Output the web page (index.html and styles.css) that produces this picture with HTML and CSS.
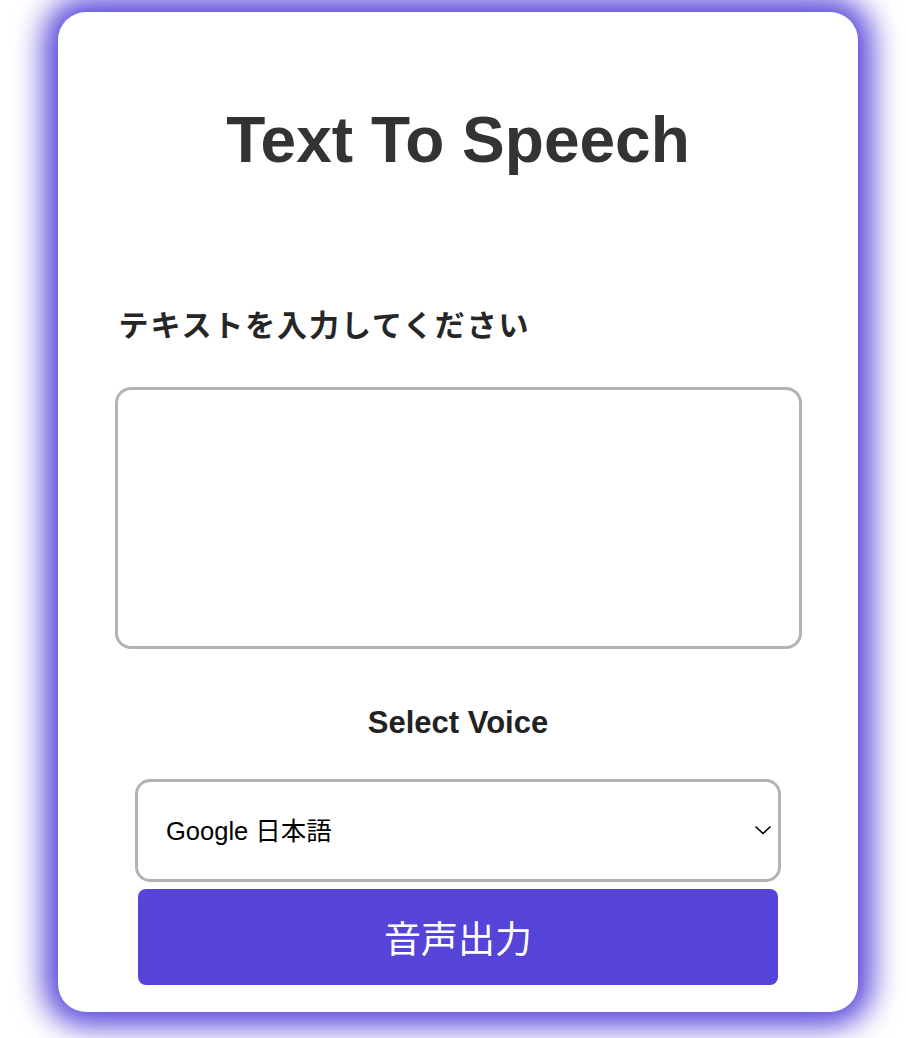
FILE: index.html
```html
<!DOCTYPE html>
<html lang="ja">
<head>
<meta charset="utf-8">
<title>Text To Speech</title>
<link rel="stylesheet" href="styles.css">
</head>
<body>
  <main class="card">
    <h1 class="title">Text To Speech</h1>
    <div class="form">
      <label class="label" for="text">テキストを入力してください</label>
      <textarea id="text" class="textarea"></textarea>
      <h2 class="voice-title">Select Voice</h2>
      <div class="select-wrap">
        <select class="select">
          <option>Google 日本語</option>
        </select>
        <svg class="chevron" width="16" height="9" viewBox="0 0 16 9" aria-hidden="true">
          <path d="M1 1 L8 7.5 L15 1" fill="none" stroke="#000" stroke-width="1.7" stroke-linecap="round" stroke-linejoin="round"/>
        </svg>
      </div>
      <button class="button" type="button">音声出力</button>
    </div>
  </main>
</body>
</html>
```

FILE: styles.css
```css
html, body {
  margin: 0;
  padding: 0;
  background: #ffffff;
}

body {
  padding: 12px 0 0 58px;
  font-family: "Liberation Sans", "Noto Sans CJK JP", sans-serif;
  overflow: hidden;
  height: 1038px;
  box-sizing: border-box;
}

.card {
  width: 800px;
  box-sizing: border-box;
  background: #ffffff;
  border-radius: 28px;
  padding: 96px 0 27px;
  box-shadow: 0 0 30px 14px #5644d9;
  display: flex;
  flex-direction: column;
  align-items: center;
}

.title {
  margin: 0;
  font-size: 64px;
  line-height: 64px;
  font-weight: 700;
  color: #333333;
  text-align: center;
}

.form {
  width: 687px;
  display: flex;
  flex-direction: column;
  align-items: center;
}

.label {
  align-self: flex-start;
  margin-top: 136px;
  padding-left: 4px;
  font-family: "Noto Sans CJK JP", sans-serif;
  font-weight: 700;
  font-size: 30px;
  line-height: 30px;
  letter-spacing: 1.9px;
  color: #262626;
}

.textarea {
  display: block;
  margin-top: 49px;
  width: 687px;
  height: 262px;
  box-sizing: border-box;
  border: 3px solid #b3b3b3;
  border-radius: 16px;
  background: #ffffff;
  resize: none;
  outline: none;
  font-size: 20px;
}

.voice-title {
  margin: 58px 0 0;
  font-size: 31px;
  line-height: 31px;
  font-weight: 700;
  color: #222222;
}

.select-wrap {
  position: relative;
  margin-top: 41px;
  width: 646px;
  height: 103px;
}

.select {
  appearance: none;
  -webkit-appearance: none;
  width: 646px;
  height: 103px;
  box-sizing: border-box;
  border: 3px solid #b3b3b3;
  border-radius: 15px;
  background: #ffffff;
  padding: 0 0 0 28px;
  font-family: "Liberation Sans", "Noto Sans CJK JP", sans-serif;
  font-size: 25.5px;
  color: #000000;
  outline: none;
}

.chevron {
  position: absolute;
  left: 620px;
  top: 47px;
  pointer-events: none;
}

.button {
  margin-top: 7px;
  width: 640px;
  height: 96px;
  border: none;
  border-radius: 8px;
  background: #5644d9;
  color: #ffffff;
  font-family: "Noto Sans CJK JP", sans-serif;
  font-size: 37px;
  font-weight: 400;
  line-height: 1;
  padding: 0;
}
```
